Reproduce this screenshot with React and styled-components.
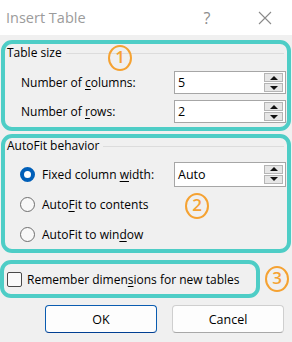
import React from "react";
import styled, { createGlobalStyle } from "styled-components";

const Global = createGlobalStyle`
  body {
    margin: 0;
    background: #f0f0f0;
    font-family: "Segoe UI", "Open Sans", "Noto Sans", sans-serif;
    font-size: 12px;
    color: #000;
  }
`;

const Window = styled.div`
  width: 292px;
  height: 342px;
  background: #f0f0f0;
  overflow: hidden;
`;

const TitleBar = styled.div`
  height: 35px;
  background: #fff;
  display: flex;
  align-items: center;
  padding-left: 6px;
`;

const Title = styled.div`
  flex: 1;
  font-size: 14.5px;
  color: #9b9b9b;
  margin-top: -1px;
`;

const Help = styled.div`
  width: 16px;
  font-size: 16px;
  color: #8c8c8c;
  margin-right: 43px;
  text-align: center;
`;

const Close = styled.div`
  width: 14px;
  height: 14px;
  margin-right: 20px;
  display: flex;
`;

const Body = styled.div`
  display: flex;
  flex-direction: column;
  padding-top: 5px;
`;

const Highlight = styled.div`
  position: relative;
  box-sizing: border-box;
  width: ${(p) => p.$w}px;
  height: ${(p) => p.$h}px;
  margin-left: ${(p) => p.$left || 0}px;
  margin-top: ${(p) => p.$top || 0}px;
  border: 4px solid #4ecdc6;
  border-radius: 11px;
  padding: ${(p) => p.$pad || "0"};
  display: flex;
  flex-direction: column;
`;

const Legend = styled.div`
  display: flex;
  align-items: center;
  height: 16px;
  line-height: 16px;
  margin-left: 2px;
  margin-right: 3px;
  &::after {
    content: "";
    flex: 1;
    height: 1px;
    background: #dcdcdc;
    margin-left: 4px;
  }
`;

const Rows = styled.div`
  display: flex;
  flex-direction: column;
  gap: 6px;
  margin-top: ${(p) => p.$top}px;
`;

const Row = styled.div`
  display: flex;
  align-items: center;
  height: ${(p) => p.$h || 24}px;
  padding-left: ${(p) => p.$indent}px;
`;

const Label = styled.div`
  flex: 1;
  white-space: nowrap;
  u {
    text-decoration: underline;
    text-underline-offset: 2px;
  }
`;

const SpinBox = styled.div`
  box-sizing: border-box;
  width: 112px;
  height: ${(p) => p.$h || 23}px;
  margin-right: 1px;
  background: #fff;
  border: 1px solid #a6a6a6;
  display: flex;
  align-items: center;
`;

const SpinValue = styled.div`
  flex: 1;
  padding-left: 3px;
  font-size: 12.5px;
`;

const SpinButtons = styled.div`
  display: flex;
  flex-direction: column;
  gap: 1px;
  margin-right: 2px;
`;

const SpinButton = styled.div`
  box-sizing: border-box;
  width: 19px;
  height: 9px;
  background: #e6e6e6;
  border: 1px solid #b5b5b5;
  display: flex;
  align-items: center;
  justify-content: center;
`;

const Arrow = styled.div`
  width: 0;
  height: 0;
  border-left: 4px solid transparent;
  border-right: 4px solid transparent;
  ${(p) =>
    p.$up ? "border-bottom: 4px solid #111;" : "border-top: 4px solid #111;"}
`;

const Radio = styled.div`
  position: relative;
  box-sizing: border-box;
  width: 15px;
  height: 15px;
  border-radius: 50%;
  margin-right: 7px;
  flex-shrink: 0;
  ${(p) =>
    p.$on
      ? "background: #005fb8; border: 4px solid #005fb8;"
      : "background: #f8f8f8; border: 1px solid #6e6e6e;"}
  &::after {
    content: "";
    display: ${(p) => (p.$on ? "block" : "none")};
    position: absolute;
    inset: 0;
    border-radius: 50%;
    background: #fff;
  }
`;

const Badge = styled.div`
  position: absolute;
  left: ${(p) => p.$x}px;
  top: ${(p) => p.$y}px;
`;

const Circle = styled.div`
  box-sizing: border-box;
  width: 24px;
  height: 26px;
  margin-left: ${(p) => p.$gap || 0}px;
  border: 2.5px solid #f5a232;
  border-radius: 50%;
  color: #f5a232;
  font-family: "Open Sans", sans-serif;
  font-weight: 600;
  font-size: 17px;
  line-height: 20px;
  display: flex;
  justify-content: center;
`;

const Line = styled.div`
  display: flex;
  align-items: center;
  margin-top: 7px;
`;

const Check = styled.div`
  box-sizing: border-box;
  width: 15px;
  height: 15px;
  border: 1px solid #4a4a4a;
  border-radius: 2px;
  background: #fafafa;
  margin: 0 5px 0 3px;
`;

const Buttons = styled.div`
  display: flex;
  justify-content: flex-end;
  gap: 15px;
  padding-right: 8px;
  margin-top: 7px;
`;

const Button = styled.div`
  box-sizing: border-box;
  width: 112px;
  height: 28px;
  border-radius: 4px;
  background: #fdfdfd;
  display: flex;
  align-items: center;
  justify-content: center;
  font-size: 12.5px;
  border: 1px solid ${(p) => (p.$primary ? "#0a5cb0" : "#cfcfcf")};
  border-bottom-color: ${(p) => (p.$primary ? "#003e92" : "#a8a8a8")};
`;

const Spin = ({ value, h }) => (
  <SpinBox $h={h}>
    <SpinValue>{value}</SpinValue>
    <SpinButtons>
      <SpinButton>
        <Arrow $up />
      </SpinButton>
      <SpinButton>
        <Arrow />
      </SpinButton>
    </SpinButtons>
  </SpinBox>
);

export default function App() {
  return (
    <Window>
      <Global />
      <TitleBar>
        <Title>Insert Table</Title>
        <Help>?</Help>
        <Close>
          <svg width="14" height="14" viewBox="0 0 14 14">
            <path d="M1 1 L13 13 M13 1 L1 13" stroke="#8a8a8a" strokeWidth="1.1" />
          </svg>
        </Close>
      </TitleBar>
      <Body>
        <Highlight $w={290} $h={91} $left={1} $pad="1px 0 0 0">
          <Legend>Table size</Legend>
          <Badge $x={103} $y={1}>
            <Circle>1</Circle>
          </Badge>
          <Rows $top={10}>
            <Row $indent={16} $h={23}>
              <Label>
                Number of <u>c</u>olumns:
              </Label>
              <Spin value="5" />
            </Row>
            <Row $indent={16} $h={23}>
              <Label>
                Number of <u>r</u>ows:
              </Label>
              <Spin value="2" />
            </Row>
          </Rows>
        </Highlight>

        <Highlight $w={290} $h={119} $left={1} $top={3}>
          <Legend>AutoFit behavior</Legend>
          <Badge $x={180} $y={55}>
            <Circle>2</Circle>
          </Badge>
          <Rows $top={8}>
            <Row $indent={15}>
              <Radio $on />
              <Label>
                Fixed column <u>w</u>idth:
              </Label>
              <Spin value="Auto" h={25} />
            </Row>
            <Row $indent={15}>
              <Radio />
              <Label>
                Auto<u>F</u>it to contents
              </Label>
            </Row>
            <Row $indent={15}>
              <Radio />
              <Label>
                AutoFit to win<u>d</u>ow
              </Label>
            </Row>
          </Rows>
        </Highlight>

        <Line>
          <Highlight $w={260} $h={38}>
            <Row $indent={0} $h={30}>
              <Check />
              <Label>
                Remember dimen<u>s</u>ions for new tables
              </Label>
            </Row>
          </Highlight>
          <Circle $gap={5}>3</Circle>
        </Line>

        <Buttons>
          <Button $primary>OK</Button>
          <Button>Cancel</Button>
        </Buttons>
      </Body>
    </Window>
  );
}
